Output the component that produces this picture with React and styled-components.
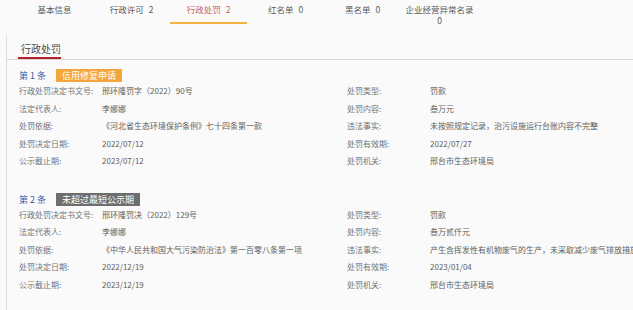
import styled, { createGlobalStyle } from "styled-components";

const GlobalStyle = createGlobalStyle`
  body {
    margin: 0;
    background: #fafafa;
    font-family: "Noto Sans CJK SC", "Noto Sans", sans-serif;
    overflow: hidden;
  }
`;

const tabs = [
  { label: "基本信息" },
  { label: "行政许可", count: 2 },
  { label: "行政处罚", count: 2, active: true },
  { label: "红名单", count: 0 },
  { label: "黑名单", count: 0 },
  { label: "企业经营异常名录", count: 0, wrap: true },
];

const records = [
  {
    no: 1,
    badge: "信用修复申请",
    tone: "orange",
    rows: [
      ["行政处罚决定书文号:", "邢环隆罚字（2022）90号", "处罚类型:", "罚款"],
      ["法定代表人:", "李娜娜", "处罚内容:", "叁万元"],
      ["处罚依据:", "《河北省生态环境保护条例》七十四条第一款", "违法事实:", "未按照规定记录，治污设施运行台账内容不完整"],
      ["处罚决定日期:", "2022/07/12", "处罚有效期:", "2022/07/27"],
      ["公示截止期:", "2023/07/12", "处罚机关:", "邢台市生态环境局"],
    ],
  },
  {
    no: 2,
    badge: "未超过最短公示期",
    tone: "grey",
    rows: [
      ["行政处罚决定书文号:", "邢环隆罚决（2022）129号", "处罚类型:", "罚款"],
      ["法定代表人:", "李娜娜", "处罚内容:", "叁万贰仟元"],
      ["处罚依据:", "《中华人民共和国大气污染防治法》第一百零八条第一项", "违法事实:", "产生含挥发性有机物废气的生产，未采取减少废气排放措施"],
      ["处罚决定日期:", "2022/12/19", "处罚有效期:", "2023/01/04"],
      ["公示截止期:", "2023/12/19", "处罚机关:", "邢台市生态环境局"],
    ],
  },
];

const App = () => {
  return (
    <>
      <GlobalStyle />
      <TabBar>
        {tabs.map((t) => (
          <Tab key={t.label} $active={t.active}>
            {t.label}
            {t.wrap && <br />}
            {t.count !== undefined && <Count $wrap={t.wrap}>{t.count}</Count>}
          </Tab>
        ))}
      </TabBar>
      <Panel>
        <SubTabs>
          <SubTab>行政处罚</SubTab>
        </SubTabs>
        <Content>
          {records.map((r) => (
            <Record key={r.no}>
              <RecordHeader>
                <RecordNo>第 {r.no} 条</RecordNo>
                <Badge $tone={r.tone}>{r.badge}</Badge>
              </RecordHeader>
              <Grid>
                {r.rows.map((row, i) =>
                  row.map((cell, j) =>
                    j % 2 === 0 ? (
                      <Label key={`${i}-${j}`}>{cell}</Label>
                    ) : (
                      <Value key={`${i}-${j}`}>{cell}</Value>
                    )
                  )
                )}
              </Grid>
            </Record>
          ))}
        </Content>
      </Panel>
    </>
  );
};

const TabBar = styled.div`
  display: flex;
  align-items: flex-start;
  padding-left: 16px;
  height: 24px;
`;

const Tab = styled.div`
  box-sizing: border-box;
  width: 77px;
  height: 24px;
  padding-top: 4px;
  text-align: center;
  font-size: 8.5px;
  line-height: 11px;
  color: ${(p) => (p.$active ? "#c8656b" : "#5a5a5a")};
  border-bottom: 2px solid ${(p) => (p.$active ? "#f0b440" : "transparent")};
`;

const Count = styled.span`
  margin-left: ${(p) => (p.$wrap ? "0" : "5px")};
`;

const Panel = styled.div`
  margin-top: 11px;
  margin-left: 6px;
  border-left: 1px solid #dcdcdc;
  height: 275px;
`;

const SubTabs = styled.div`
  display: flex;
  padding-left: 11px;
  border-bottom: 1px solid #d6d6d6;
`;

const SubTab = styled.div`
  padding: 8px 0 2px 3px;
  font-size: 10px;
  line-height: 12px;
  color: #4a4a4a;
  border-bottom: 2px solid #b3202c;
`;

const Content = styled.div`
  display: flex;
  flex-direction: column;
  gap: 23px;
  padding: 9px 0 0 12px;
`;

const Record = styled.div`
  display: flex;
  flex-direction: column;
`;

const RecordHeader = styled.div`
  display: flex;
  align-items: center;
  gap: 10px;
  height: 13px;
`;

const RecordNo = styled.span`
  font-size: 9px;
  color: #3d5aa6;
`;

const Badge = styled.span`
  padding: 0 6px;
  height: 13px;
  line-height: 13px;
  font-size: 9px;
  color: #fff;
  background: ${(p) => (p.$tone === "orange" ? "#f4a63a" : "#6e6e6e")};
`;

const Grid = styled.div`
  display: grid;
  grid-template-columns: 83px 245px 83px auto;
  grid-auto-rows: 17.5px;
  align-items: center;
  white-space: nowrap;
  font-size: 8px;
`;

const Label = styled.span`
  color: #747474;
`;

const Value = styled.span`
  color: #606060;
`;

export default App;
